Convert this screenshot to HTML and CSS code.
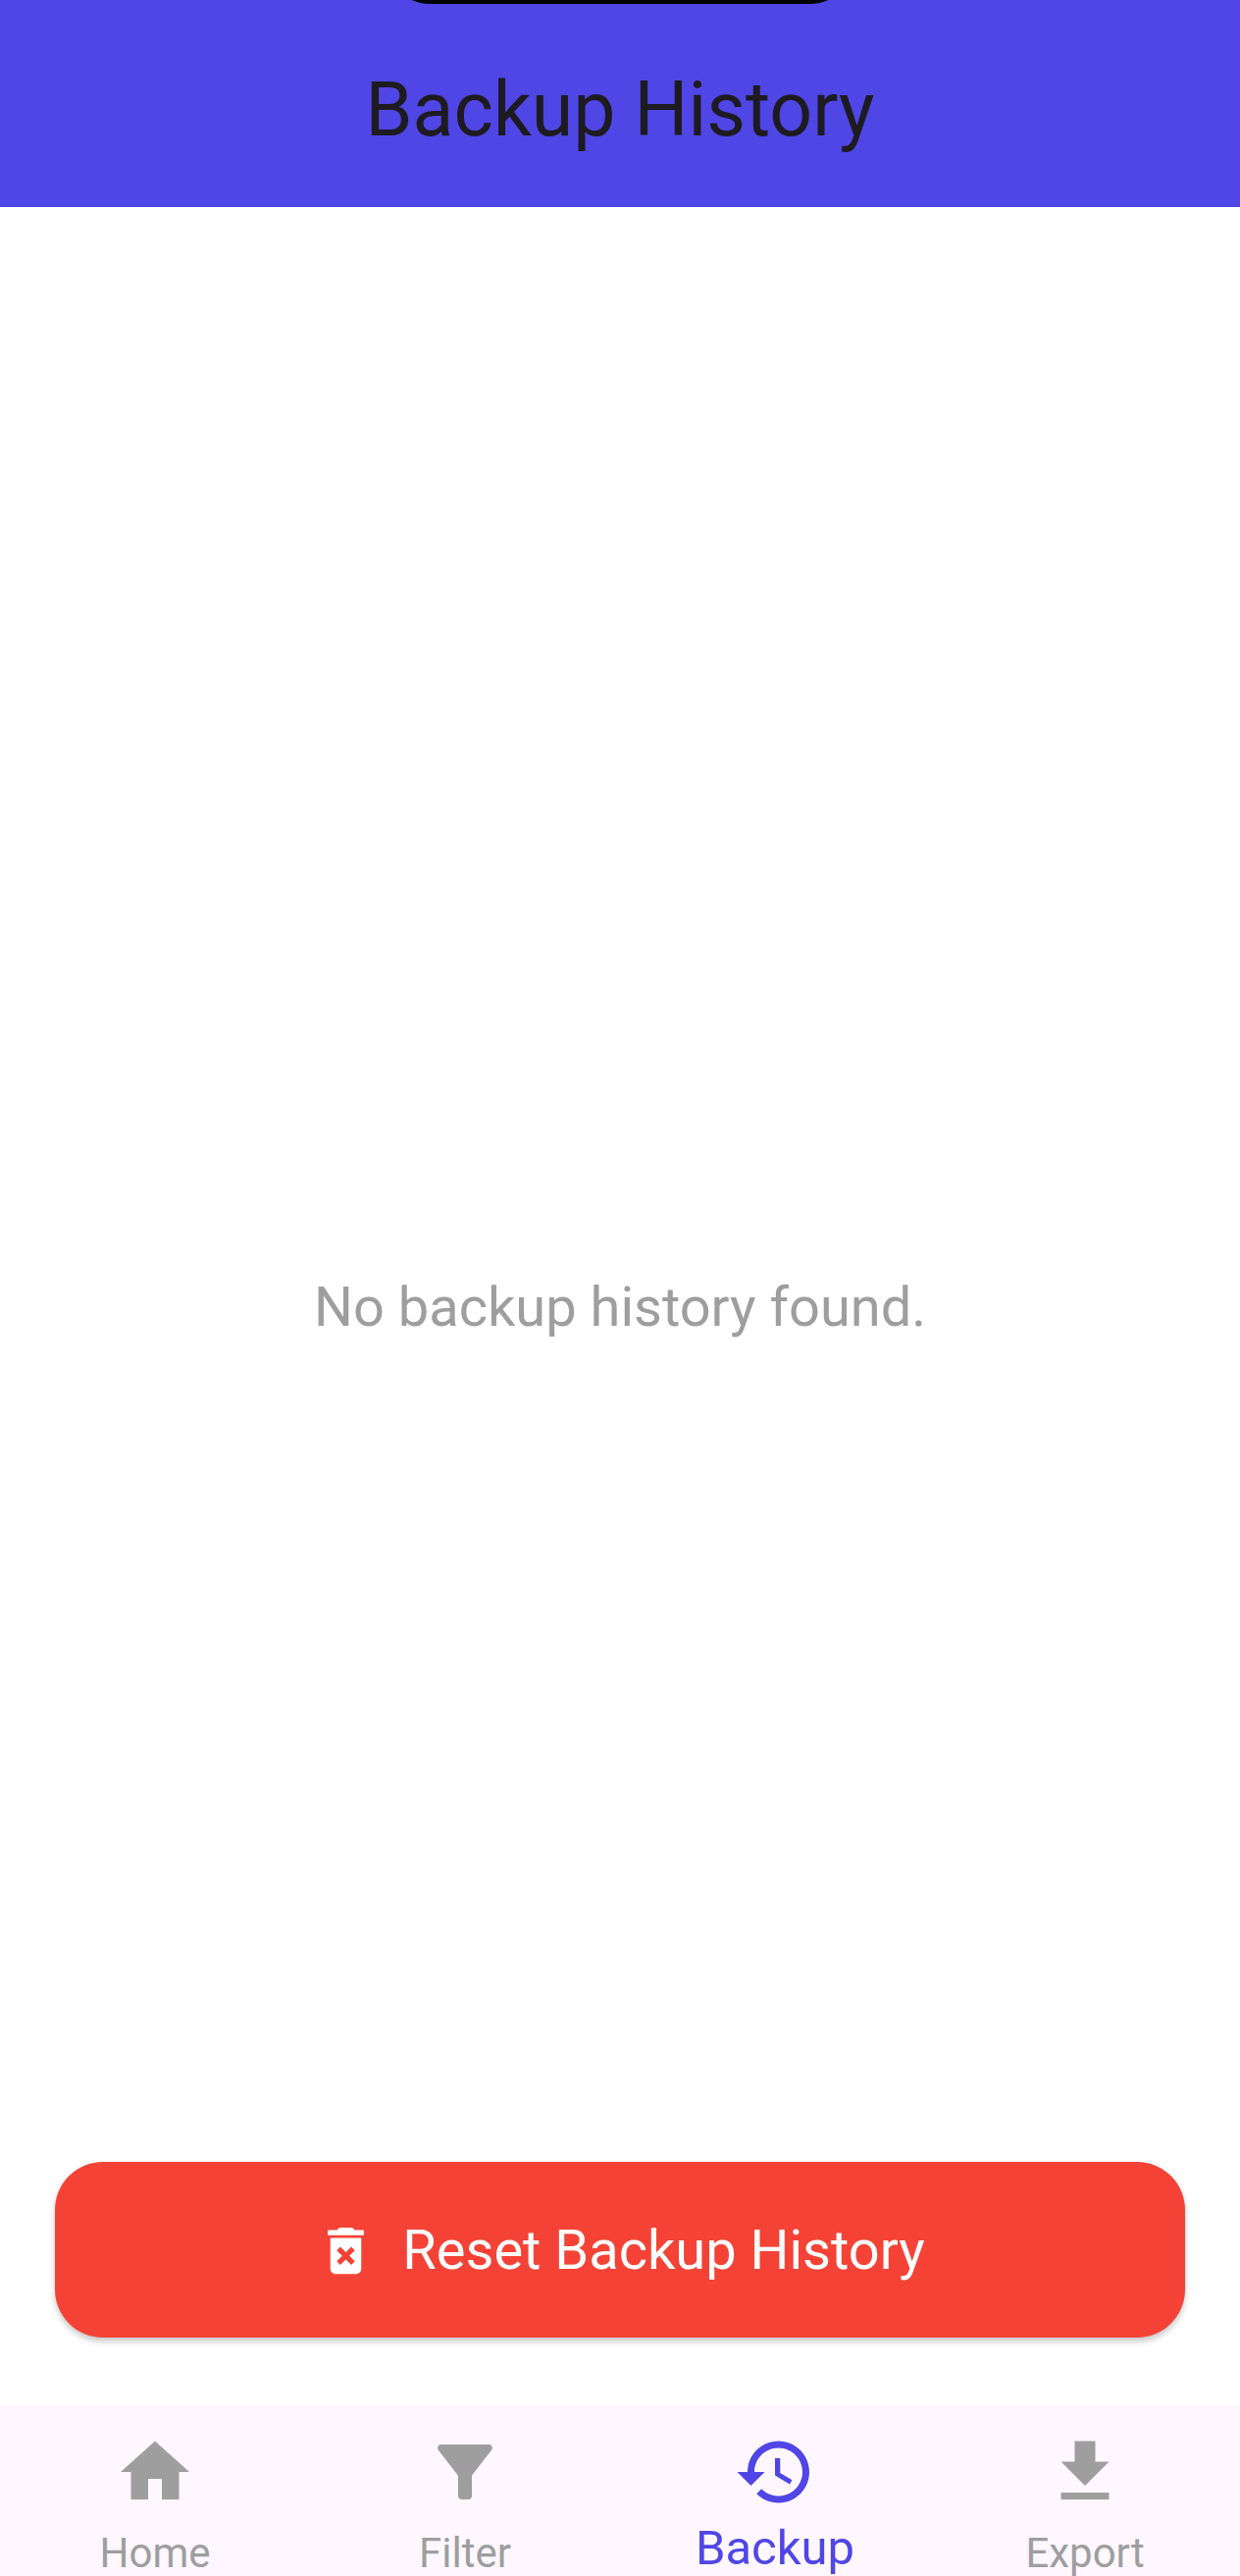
FILE: index.html
```html
<!DOCTYPE html>
<html lang="en">
<head>
<meta charset="utf-8">
<meta name="viewport" content="width=device-width, initial-scale=1">
<title>Backup History</title>
<link rel="stylesheet" href="styles.css">
</head>
<body>
<div class="app">
  <header class="app-bar">
    <div class="camera-notch"></div>
    <h1 class="app-title">Backup History</h1>
  </header>
  <main class="content">
    <p class="empty-message">No backup history found.</p>
    <button class="reset-button" type="button">
      <svg class="reset-icon" viewBox="0 0 24 24" aria-hidden="true"><path d="M6 19c0 1.1.9 2 2 2h8c1.1 0 2-.9 2-2V7H6v12zm2.46-7.12l1.41-1.41L12 12.59l2.12-2.12 1.41 1.41L13.41 14l2.12 2.12-1.41 1.41L12 15.41l-2.12 2.12-1.41-1.41L10.59 14l-2.13-2.12zM15.5 4l-1-1h-5l-1 1H5v2h14V4z"/></svg>
      <span>Reset Backup History</span>
    </button>
  </main>
  <nav class="bottom-nav">
    <a class="nav-item" href="#home">
      <svg class="nav-icon" viewBox="0 0 24 24" aria-hidden="true"><path d="M10 20v-6h4v6h5v-8h3L12 3 2 12h3v8z"/></svg>
      <span class="nav-label">Home</span>
    </a>
    <a class="nav-item" href="#filter">
      <svg class="nav-icon" viewBox="0 0 24 24" aria-hidden="true"><path d="M4.25 5.61C6.27 8.2 10 13 10 13v6c0 .55.45 1 1 1h2c.55 0 1-.45 1-1v-6s3.72-4.8 5.74-7.39C20.25 4.95 19.78 4 18.95 4H5.04C4.21 4 3.74 4.95 4.25 5.61z"/></svg>
      <span class="nav-label">Filter</span>
    </a>
    <a class="nav-item nav-item-active" href="#backup" aria-current="page">
      <svg class="nav-icon" viewBox="0 0 24 24" aria-hidden="true"><path d="M13 3c-4.97 0-9 4.03-9 9H1l3.89 3.89.07.14L9 12H6c0-3.87 3.13-7 7-7s7 3.13 7 7-3.13 7-7 7c-1.93 0-3.68-.79-4.94-2.06l-1.42 1.42C8.27 19.99 10.51 21 13 21c4.97 0 9-4.03 9-9s-4.03-9-9-9zm-1 5v5l4.28 2.54.72-1.21-3.5-2.08V8H12z"/></svg>
      <span class="nav-label">Backup</span>
    </a>
    <a class="nav-item" href="#export">
      <svg class="nav-icon" viewBox="0 0 24 24" aria-hidden="true"><path d="M19 9h-4V3H9v6H5l7 7 7-7zM5 18v2h14v-2H5z"/></svg>
      <span class="nav-label">Export</span>
    </a>
  </nav>
</div>
</body>
</html>
```
FILE: styles.css
```css
* {
  box-sizing: border-box;
}

body {
  margin: 0;
  background: #fff;
  font-family: Roboto, "Liberation Sans", sans-serif;
}

.app {
  display: flex;
  flex-direction: column;
  min-height: 100vh;
}

.app-bar {
  position: relative;
  overflow: hidden;
  padding: 66px 56px 53px;
  background: #4f46e5;
  color: #1d1b20;
  text-align: center;
}

/* Lower edge of the camera cut-out */
.camera-notch {
  position: absolute;
  top: -90px;
  left: 50%;
  width: 480px;
  height: 94px;
  margin-left: -240px;
  border-radius: 47px;
  background: #000;
}

.app-title {
  margin: 0;
  font-size: 77px;
  font-weight: 400;
  line-height: 92px;
}

/* The message is centred in the whole area; the button shares its cell */
.content {
  display: grid;
  flex: 1;
  padding: 0 56px;
}

.empty-message {
  grid-area: 1 / 1;
  align-self: center;
  justify-self: center;
  margin: 0;
  padding-top: 2px;
  color: #9e9e9e;
  font-size: 56px;
  line-height: 84px;
}

.reset-button {
  grid-area: 1 / 1;
  align-self: end;
  display: flex;
  align-items: center;
  justify-content: center;
  gap: 26px;
  margin: 0 0 69px;
  padding: 57px 56px 55px;
  border: 0;
  border-radius: 49px;
  background: #f44336;
  box-shadow: 0 4px 6px rgba(0, 0, 0, 0.22);
  color: #fff;
  font-family: inherit;
  font-size: 56px;
  line-height: 67px;
}

.reset-icon {
  width: 63px;
  height: 63px;
  fill: currentColor;
}

.bottom-nav {
  display: grid;
  grid-template-columns: repeat(4, 1fr);
  height: 174px;
  padding-top: 26px;
  overflow: hidden;
  background: #fef7ff;
}

.nav-item {
  display: flex;
  flex-direction: column;
  align-items: center;
  color: #9e9e9e;
  font-size: 42px;
  line-height: 60px;
  text-decoration: none;
}

.nav-item-active {
  color: #4f46e5;
  font-size: 49px;
  line-height: 50px;
}

.nav-icon {
  width: 84px;
  height: 84px;
  fill: currentColor;
}

.nav-label {
  padding-top: 11px;
}
```
